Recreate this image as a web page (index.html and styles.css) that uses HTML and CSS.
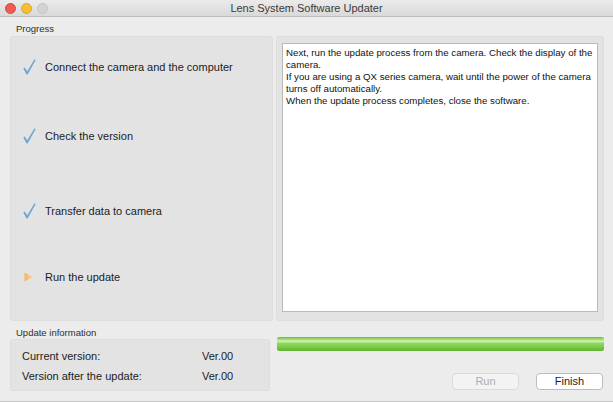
FILE: index.html
```html
<!DOCTYPE html>
<html>
<head>
<meta charset="utf-8">
<title>Lens System Software Updater</title>
<link rel="stylesheet" href="styles.css">
</head>
<body>
<div class="window">
  <div class="titlebar">
    <div class="lights">
      <span class="light red"></span>
      <span class="light yellow"></span>
      <span class="light gray"></span>
    </div>
    <div class="title">Lens System Software Updater</div>
  </div>
  <div class="content">
    <div class="left">
      <div class="label label-top">Progress</div>
      <div class="panel steps">
        <div class="step">
          <span class="icon"><svg width="13" height="16" viewBox="0 0 13 16"><path d="M0.3 9.4 L1.8 8.5 L4.2 12.6 L11.5 0.2 L12.7 0.9 L4.6 15.5 L3.6 15.5 Z" fill="#6fa3d2"/></svg></span>
          <span class="step-text">Connect the camera and the computer</span>
        </div>
        <div class="step">
          <span class="icon"><svg width="13" height="16" viewBox="0 0 13 16"><path d="M0.3 9.4 L1.8 8.5 L4.2 12.6 L11.5 0.2 L12.7 0.9 L4.6 15.5 L3.6 15.5 Z" fill="#6fa3d2"/></svg></span>
          <span class="step-text">Check the version</span>
        </div>
        <div class="step">
          <span class="icon"><svg width="13" height="16" viewBox="0 0 13 16"><path d="M0.3 9.4 L1.8 8.5 L4.2 12.6 L11.5 0.2 L12.7 0.9 L4.6 15.5 L3.6 15.5 Z" fill="#6fa3d2"/></svg></span>
          <span class="step-text">Transfer data to camera</span>
        </div>
        <div class="step">
          <span class="icon"><svg width="13" height="16" viewBox="0 0 13 16"><defs><linearGradient id="tri" x1="0" y1="0" x2="1" y2="0"><stop offset="0" stop-color="#f4b45c"/><stop offset="1" stop-color="#f8d4a2"/></linearGradient></defs><path d="M1.5 3.5 L10 8 L1.5 12.5 Z" fill="url(#tri)"/></svg></span>
          <span class="step-text">Run the update</span>
        </div>
      </div>
      <div class="label label-info">Update information</div>
      <div class="panel info">
        <span class="info-key">Current version:</span>
        <span class="info-val">Ver.00</span>
        <span class="info-key">Version after the update:</span>
        <span class="info-val">Ver.00</span>
      </div>
    </div>
    <div class="right">
      <div class="panel message-panel">
        <div class="message">
          Next, run the update process from the camera. Check the display of the camera.<br>
          If you are using a QX series camera, wait until the power of the camera turns off automatically.<br>
          When the update process completes, close the software.
        </div>
      </div>
      <div class="progress"></div>
      <div class="buttons">
        <button class="btn btn-disabled" disabled>Run</button>
        <button class="btn">Finish</button>
      </div>
    </div>
  </div>
</div>
</body>
</html>
```
FILE: styles.css
```css
html, body {
  margin: 0;
  padding: 0;
}
body {
  width: 613px;
  height: 403px;
  overflow: hidden;
  background: #ffffff;
  font-family: "Liberation Sans", Arial, sans-serif;
  color: #1c1c1c;
}
.window {
  height: 401px;
  background: #ececec;
  border-bottom: 1px solid #c9c9c9;
}
.titlebar {
  position: relative;
  height: 16px;
  background: linear-gradient(to bottom, #ebebeb, #d9d9d9);
  border-bottom: 1px solid #bdbdbd;
  display: flex;
  align-items: center;
  justify-content: center;
}
.lights {
  position: absolute;
  left: 5px;
  top: 3px;
  display: flex;
  gap: 5px;
}
.light {
  width: 11px;
  height: 11px;
  border-radius: 50%;
  box-sizing: border-box;
}
.red { background: #ef5b52; border: 0.5px solid #de4740; }
.yellow { background: #f6be30; border: 0.5px solid #e0a626; }
.gray { background: #d3d3d3; border: 0.5px solid #c4c4c4; }
.title {
  font-size: 11px;
  color: #3a3a3a;
  line-height: 16px;
}
.content {
  display: flex;
  gap: 3px;
  padding-left: 10px;
}
.left {
  width: 263px;
  display: flex;
  flex-direction: column;
}
.label {
  font-size: 9.5px;
  color: #2e2e2e;
  line-height: 12px;
  padding-left: 6px;
}
.label-top {
  padding-top: 6px;
  height: 13px;
}
.label-info {
  padding-top: 6px;
  height: 12px;
}
.panel {
  background: #e3e3e3;
  border: 1px solid #dddddd;
  border-radius: 3px;
  box-sizing: border-box;
}
.steps {
  height: 285px;
  padding-top: 20px;
  display: flex;
  flex-direction: column;
}
.step {
  height: 20px;
  display: flex;
  align-items: center;
  font-size: 11px;
}
.step:nth-child(2) { margin-top: 49px; }
.step:nth-child(3) { margin-top: 55px; }
.step:nth-child(4) { margin-top: 46px; }
.icon {
  width: 22px;
  height: 16px;
  padding-left: 12px;
  display: flex;
  align-items: center;
}
.icon svg { display: block; }
.info {
  width: 260px;
  height: 52px;
  padding: 6px 0 0 11px;
  display: grid;
  grid-template-columns: 180px auto;
  grid-auto-rows: 20px;
  align-items: center;
  font-size: 11px;
}
.right {
  width: 328px;
  padding-top: 19px;
  display: flex;
  flex-direction: column;
}
.message-panel {
  height: 285px;
  padding: 6px 5px 8px 5px;
}
.message {
  height: 100%;
  box-sizing: border-box;
  background: #ffffff;
  border: 1px solid #b9b9b9;
  padding: 3px 3px;
  font-size: 9.7px;
  line-height: 12px;
  color: #111;
}
.progress {
  margin-top: 16px;
  margin-left: 1px;
  height: 14px;
  border-radius: 2px;
  background: linear-gradient(to bottom, #6cbc3a 0%, #a6dd7c 18%, #d2f2b4 30%, #93d65f 46%, #7dca49 70%, #5fb232 100%);
}
.buttons {
  margin-top: 22px;
  display: flex;
  justify-content: flex-end;
  gap: 17px;
  padding-right: 1px;
}
.btn {
  width: 67px;
  height: 17px;
  margin: 0;
  padding: 0;
  box-sizing: border-box;
  border-radius: 4px;
  background: #ffffff;
  border: 1px solid #bcbcbc;
  font-family: "Liberation Sans", Arial, sans-serif;
  font-size: 11px;
  color: #1c1c1c;
  line-height: 15px;
}
.btn-disabled {
  background: #f3f3f3;
  border-color: #dadada;
  color: #adadad;
}
```
